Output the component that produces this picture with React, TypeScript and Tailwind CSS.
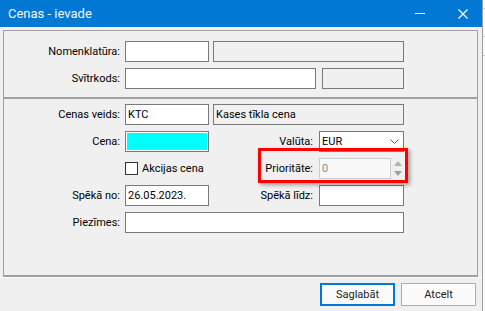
import React from "react";

const font = { fontFamily: "Roboto, 'Noto Sans', sans-serif" };

function Box({ w, value, gray, cyan }: { w: string; value?: string; gray?: boolean; cyan?: boolean }) {
  return (
    <div
      className={`${w} h-[21px] shrink-0 border border-[#7a7a7a] flex items-center leading-none whitespace-nowrap overflow-hidden ${
        gray ? "bg-[#f0f0f0]" : "bg-white"
      } ${cyan ? "px-[1px]" : "px-[2px]"}`}
    >
      {cyan ? <div className="w-full h-[17px] bg-[#00ffff]" /> : value}
    </div>
  );
}

function Label({ w, children }: { w: string; children: React.ReactNode }) {
  return <div className={`${w} shrink-0 text-right leading-none whitespace-nowrap`}>{children}</div>;
}

export default function App() {
  return (
    <div className="w-[485px] h-[311px] flex bg-[#f0f0f0] text-[11px] text-black overflow-hidden" style={font}>
      <div className="relative w-[482px] h-full flex flex-col">
        {/* title bar */}
        <div className="h-[27px] shrink-0 bg-[#0078d4] flex items-center text-white">
          <span className="ml-[8px] text-[13px] leading-none text-[#f4f8fc]">Cenas - ievade</span>
          <div className="ml-auto flex items-center">
            <svg width="10" height="2" viewBox="0 0 10 2" className="mr-[33px]">
              <rect x="0" y="0" width="10" height="1" fill="#fff" />
            </svg>
            <svg width="10" height="10" viewBox="0 0 10 10" className="mr-[14px]">
              <path d="M0.5 0.5 L9.5 9.5 M9.5 0.5 L0.5 9.5" stroke="#fff" strokeWidth="1.2" />
            </svg>
          </div>
        </div>

        {/* content */}
        <div className="ml-[3px] mt-[3px] w-[475px] flex flex-col">
          <div className="border border-[#a0a0a0] pt-[10px] pb-[8px] flex flex-col gap-[6px]">
            <div className="flex items-center h-[21px]">
              <Label w="w-[116px]">Nomenklatūra:</Label>
              <div className="ml-[5px] flex gap-[4px]">
                <Box w="w-[84px]" />
                <Box w="w-[191px]" gray />
              </div>
            </div>
            <div className="flex items-center h-[21px]">
              <Label w="w-[116px]">Svītrkods:</Label>
              <div className="ml-[5px] flex gap-[6px]">
                <Box w="w-[191px]" />
                <Box w="w-[82px]" gray />
              </div>
            </div>
          </div>

          <div className="border-x border-t border-b-2 border-[#a0a0a0] pt-[5px] pb-[42px] flex flex-col gap-[6px]">
            <div className="flex items-center h-[21px]">
              <Label w="w-[116px]">Cenas veids:</Label>
              <div className="ml-[5px] flex gap-[4px]">
                <Box w="w-[84px]" value="KTC" />
                <Box w="w-[191px]" value="Kases tīkla cena" gray />
              </div>
            </div>
            <div className="flex items-center h-[21px]">
              <Label w="w-[116px]">Cena:</Label>
              <div className="ml-[5px]">
                <Box w="w-[84px]" cyan />
              </div>
              <Label w="w-[104px]">Valūta:</Label>
              <div className="ml-[6px] w-[85px] h-[21px] border border-[#7a7a7a] bg-white flex items-center pl-[2px] pr-[4px]">
                <span className="leading-none">EUR</span>
                <svg width="9" height="5" viewBox="0 0 9 5" className="ml-auto">
                  <path d="M0.5 0.5 L4.5 4.5 L8.5 0.5" stroke="#606060" fill="none" strokeWidth="1" />
                </svg>
              </div>
            </div>
            <div className="flex items-center h-[21px]">
              <div className="w-[121px] shrink-0" />
              <div className="w-[84px] shrink-0 flex items-center gap-[4px]">
                <div className="w-[13px] h-[13px] border border-[#333] bg-white" />
                <span className="leading-none">Akcijas cena</span>
              </div>
              <Label w="w-[104px]">Prioritāte:</Label>
              <div className="ml-[6px] w-[72px] h-[21px] border border-[#cccccc] bg-[#f8f8f8] flex items-center px-[2px] text-[#8a8a8a] leading-none">
                0
              </div>
              <div className="ml-[3px] flex flex-col gap-[5px]">
                <svg width="8" height="5" viewBox="0 0 8 5">
                  <path d="M4 0 L8 5 L0 5 Z" fill="#b0b0b0" />
                </svg>
                <svg width="8" height="5" viewBox="0 0 8 5">
                  <path d="M0 0 L8 0 L4 5 Z" fill="#a0a0a0" />
                </svg>
              </div>
            </div>
            <div className="flex items-center h-[21px]">
              <Label w="w-[116px]">Spēkā no:</Label>
              <div className="ml-[5px]">
                <Box w="w-[84px]" value="26.05.2023." />
              </div>
              <Label w="w-[104px]">Spēkā līdz:</Label>
              <div className="ml-[6px]">
                <Box w="w-[85px]" />
              </div>
            </div>
            <div className="flex items-center h-[21px]">
              <Label w="w-[116px]">Piezīmes:</Label>
              <div className="ml-[5px]">
                <Box w="w-[279px]" />
              </div>
            </div>
          </div>
        </div>

        <div className="border-t border-white pt-[5px] flex justify-end gap-[6px] pr-[6px]">
          <button className="w-[75px] h-[23px] border border-[#0078d7] shadow-[inset_0_0_0_1px_#0078d7] bg-[#fbfbfb] leading-none text-[#222]">
            Saglabāt
          </button>
          <button className="w-[75px] h-[23px] border border-[#adadad] bg-[#fbfbfb] leading-none text-[#222]">Atcelt</button>
        </div>

        {/* annotation */}
        <div className="absolute left-[258px] top-[148px] w-[150px] h-[35px] border-[3px] border-[#ff0000] shadow-[2px_2px_4px_rgba(0,0,0,0.35)]" />
      </div>

      {/* edge of the window behind */}
      <div className="w-[3px] h-full border-l border-[#a0a0a0] bg-[#fafafa] flex flex-col">
        <div className="mt-[8px] h-px bg-[#c8c8c8]" />
        <div className="mt-[27px] h-px bg-[#c8c8c8]" />
        <div className="mt-[18px] h-px bg-[#c8c8c8]" />
      </div>
    </div>
  );
}
